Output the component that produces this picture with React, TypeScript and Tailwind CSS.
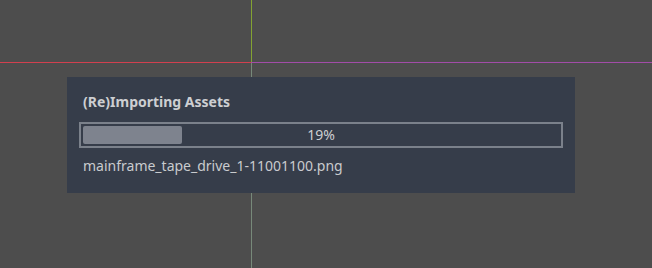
import React from 'react';

export default function App() {
  return (
    <div className="relative h-[268px] w-[652px] overflow-hidden bg-[#4d4d4d] pl-[67px] pt-[77px] font-['Noto_Sans',sans-serif]">
      {/* viewport axes */}
      <div className="absolute left-0 top-[62px] h-px w-[251px] bg-[#d2404f]" />
      <div className="absolute left-[251px] top-[62px] h-px right-0 bg-[#a24ca8]" />
      <div className="absolute left-[251px] top-0 h-[62px] w-px bg-[#83a332]" />
      <div className="absolute left-[251px] top-[63px] bottom-0 w-px bg-[#77897a]" />

      <div className="relative z-10 flex h-[116px] w-[508px] flex-col bg-[#363d4a] px-3 pt-[15px]">
        <h1 className="px-1 text-[14px] font-bold leading-[20px] text-[#cdcfd2]">(Re)Importing Assets</h1>
        <div className="mt-[10px] flex h-[26px] w-[484px] items-center border-2 border-[#7b818b] p-[2px]">
          <div className="relative h-[18px] w-full">
            <div className="absolute inset-y-0 left-0 w-[99px] rounded-[2px] bg-[#7e838e]" />
            <span className="relative flex h-full items-center justify-center text-[14px] leading-none text-[#cdcfd2]">19%</span>
          </div>
        </div>
        <p className="mt-[6px] px-1 text-[14px] leading-[24px] text-[#c9cbce]">mainframe_tape_drive_1-11001100.png</p>
      </div>
    </div>
  );
}
